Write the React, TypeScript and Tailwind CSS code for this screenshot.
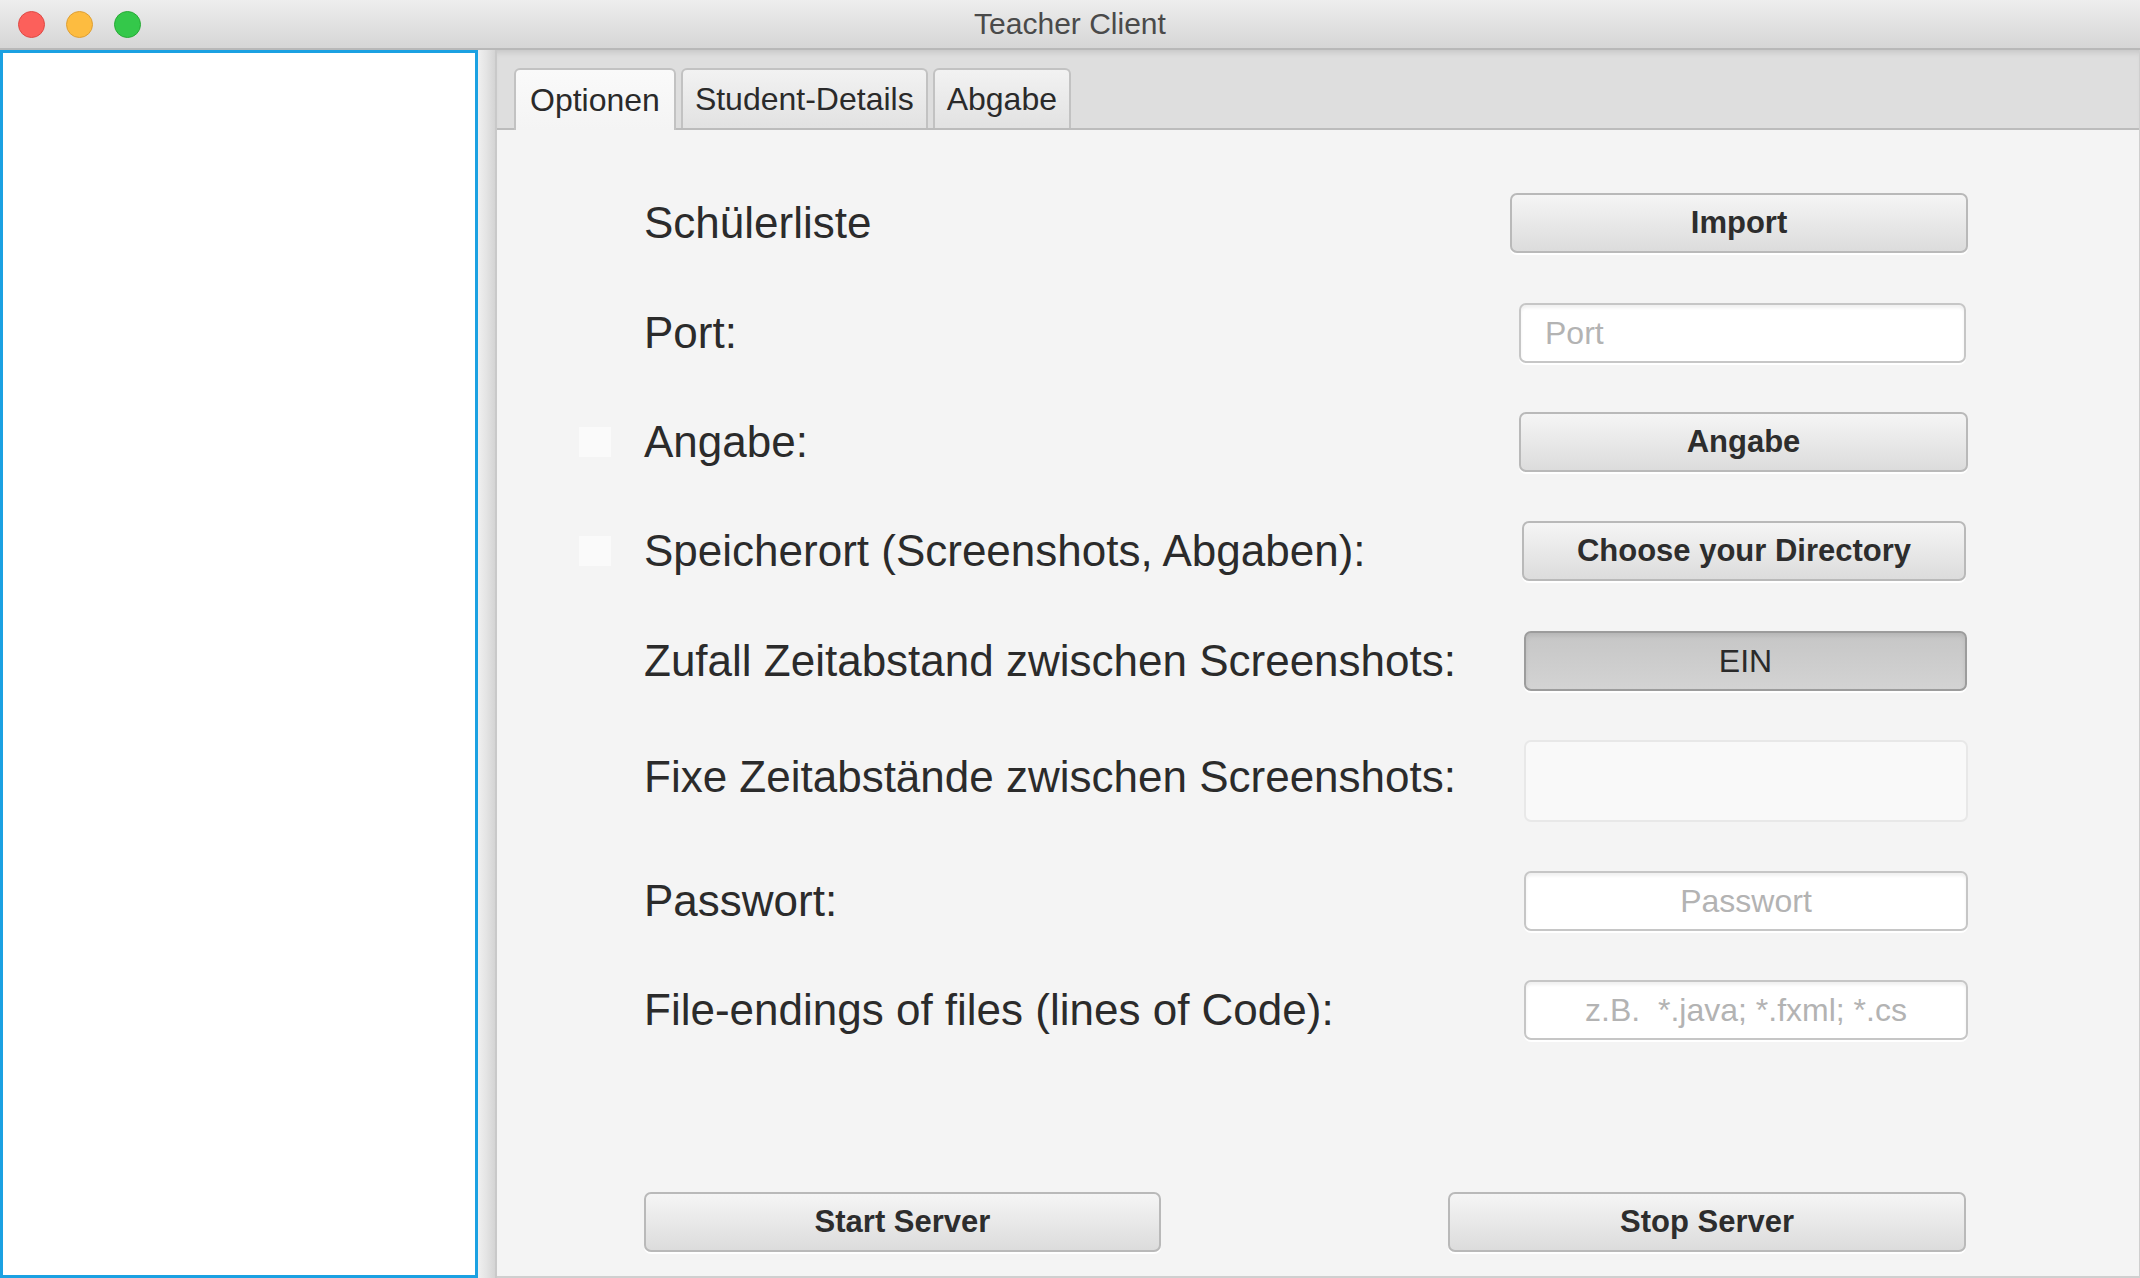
import React from "react";

const font = { fontFamily: '"Liberation Sans", Arial, sans-serif' };

const TrafficLights = () => (
  <div className="flex items-center gap-[21px] pl-[18px]">
    <span className="w-[27px] h-[27px] rounded-full bg-[#fc605b] border border-[#de4a45]" />
    <span className="w-[27px] h-[27px] rounded-full bg-[#fdbc40] border border-[#de9f34]" />
    <span className="w-[27px] h-[27px] rounded-full bg-[#34c84a] border border-[#27aa35]" />
  </div>
);

interface TabProps {
  label: string;
  active?: boolean;
}

const Tab = ({ label, active }: TabProps) => (
  <div
    className={
      active
        ? "h-[62px] px-[14px] flex items-center rounded-t-[6px] border-2 border-b-0 border-[#c2c2c2] bg-gradient-to-b from-[#fafafa] to-[#f4f4f4] text-[32px] text-[#2a2a2a] -mb-[2px] relative"
        : "h-[60px] px-[12px] flex items-center rounded-t-[6px] border-2 border-b-0 border-[#c2c2c2] bg-gradient-to-b from-[#f2f2f2] to-[#e2e2e2] text-[32px] text-[#2a2a2a]"
    }
  >
    {label}
  </div>
);

interface RowProps {
  label: string;
  check?: boolean;
  mt: string;
  h?: string;
  labelClass?: string;
  children: React.ReactNode;
}

const Row = ({ label, check, mt, h = "h-[60px]", labelClass = "", children }: RowProps) => (
  <div className={`flex items-center ${h} ${mt}`}>
    <div className="w-[32px] ml-[82px] mr-[33px] flex items-center">
      {check && <span className="w-[32px] h-[30px] bg-[#fafafa]" />}
    </div>
    <div className={`flex-1 text-[44px] text-[#2b2b2b] leading-none ${labelClass}`}>{label}</div>
    {children}
  </div>
);

const Button = ({ label, className }: { label: string; className: string }) => (
  <div
    className={`h-[60px] flex items-center justify-center rounded-[7px] border-2 border-[#b9b9b9] bg-gradient-to-b from-[#f5f5f5] to-[#dcdcdc] shadow-[0_2px_0_#ffffff] text-[31px] font-bold text-[#2d2d2d] ${className}`}
  >
    {label}
  </div>
);

const Field = ({
  placeholder,
  className,
}: {
  placeholder?: string;
  className: string;
}) => (
  <div
    className={`h-[60px] flex items-center rounded-[7px] border-2 border-[#c6c6c6] bg-white shadow-[inset_0_3px_3px_rgba(0,0,0,0.06),0_2px_0_#ffffff] text-[32px] text-[#b3b3b3] ${className}`}
  >
    {placeholder}
  </div>
);

export default function App() {
  return (
    <div className="w-[2140px] h-[1278px] flex flex-col bg-[#f4f4f4] overflow-hidden" style={font}>
      {/* title bar */}
      <div className="h-[50px] shrink-0 grid grid-cols-[1fr_auto_1fr] items-center bg-gradient-to-b from-[#eeeeee] to-[#d6d6d6] border-b-2 border-[#b8b8b8]">
        <TrafficLights />
        <div className="text-[30px] text-[#4a4a4a] leading-none">Teacher Client</div>
        <div />
      </div>

      <div className="flex-1 flex min-h-0">
        {/* list panel */}
        <div className="w-[478px] shrink-0 bg-white border-[3px] border-[#1ba1e2]" />

        {/* splitter */}
        <div className="w-[19px] shrink-0 bg-gradient-to-r from-[#f0f0f0] via-[#e4e4e4] to-[#d4d4d4] border-r-2 border-[#c9c9c9]" />

        {/* tab pane */}
        <div className="flex-1 flex flex-col border-b-2 border-r border-[#cfcfcf]">
          <div className="h-[80px] shrink-0 flex items-end gap-[5px] pl-[17px] bg-[#dedede] border-b-2 border-[#bcbcbc] shadow-[inset_0_6px_6px_-4px_rgba(0,0,0,0.12)]">
            <Tab label="Optionen" active />
            <Tab label="Student-Details" />
            <Tab label="Abgabe" />
          </div>

          <div className="flex-1 flex flex-col bg-[#f4f4f4]">
            <Row label="Schülerliste" mt="mt-[63px]">
              <Button label="Import" className="w-[458px] mr-[171px]" />
            </Row>
            <Row label="Port:" mt="mt-[50px]">
              <Field placeholder="Port" className="w-[447px] mr-[173px] pl-[24px]" />
            </Row>
            <Row label="Angabe:" check mt="mt-[49px]">
              <Button label="Angabe" className="w-[449px] mr-[171px]" />
            </Row>
            <Row label="Speicherort (Screenshots, Abgaben):" check mt="mt-[49px]">
              <Button label="Choose your Directory" className="w-[444px] mr-[173px]" />
            </Row>
            <Row label="Zufall Zeitabstand zwischen Screenshots:" mt="mt-[50px]">
              <div className="w-[443px] mr-[172px] h-[60px] flex items-center justify-center rounded-[7px] border-2 border-[#9c9c9c] bg-gradient-to-b from-[#c6c6c6] to-[#d3d3d3] shadow-[inset_0_3px_4px_rgba(0,0,0,0.08),0_2px_0_#ffffff] text-[32px] text-[#2a2a2a]">
                EIN
              </div>
            </Row>
            <Row
              label="Fixe Zeitabstände zwischen Screenshots:"
              mt="mt-[49px]"
              h="h-[82px]"
              labelClass="-translate-y-[4px]"
            >
              <div className="w-[444px] mr-[171px] h-[82px] rounded-[7px] border-2 border-[#e8e8e8] bg-[#f9f9f9]" />
            </Row>
            <Row label="Passwort:" mt="mt-[49px]">
              <Field placeholder="Passwort" className="w-[444px] mr-[171px] justify-center" />
            </Row>
            <Row label="File-endings of files (lines of Code):" mt="mt-[49px]">
              <Field
                placeholder="z.B.  *.java; *.fxml; *.cs"
                className="w-[444px] mr-[171px] justify-center whitespace-pre"
              />
            </Row>

            <div className="flex items-center justify-between mt-[152px] pl-[147px] pr-[173px]">
              <Button label="Start Server" className="w-[517px]" />
              <Button label="Stop Server" className="w-[518px]" />
            </div>
          </div>
        </div>
      </div>
    </div>
  );
}
